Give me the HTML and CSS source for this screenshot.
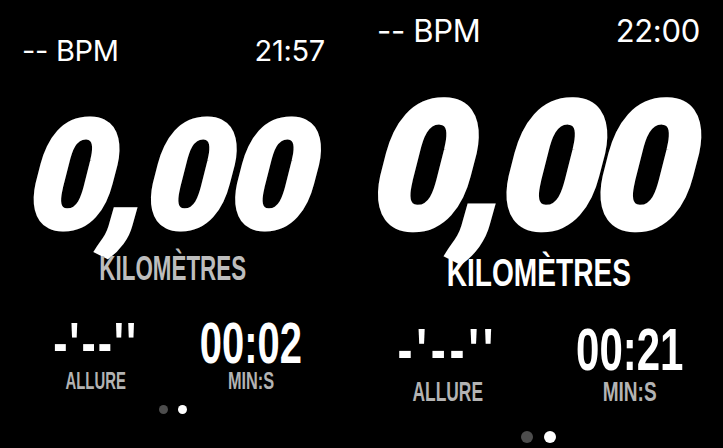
FILE: index.html
```html
<!DOCTYPE html>
<html lang="fr">
<head>
<meta charset="utf-8">
<title>Course</title>
<link rel="stylesheet" href="styles.css">
</head>
<body>
<main class="screen">
  <section class="panel p1">
    <div class="top"><span>-- BPM</span><span>21:57</span></div>
    <div class="dist">0<span class="comma">,</span>00</div>
    <div class="unit"><span>KILOMÈTRES</span></div>
    <div class="stats">
      <div class="stat">
        <div class="val pace"><span>-'--''</span></div>
        <div class="lbl"><span class="la">ALLURE</span></div>
      </div>
      <div class="stat">
        <div class="val"><span>00:02</span></div>
        <div class="lbl"><span class="lm">MIN:S</span></div>
      </div>
    </div>
    <div class="dots"><i></i><i class="on"></i></div>
  </section>
  <section class="panel p2">
    <div class="top"><span>-- BPM</span><span>22:00</span></div>
    <div class="dist">0<span class="comma">,</span>00</div>
    <div class="unit"><span>KILOMÈTRES</span></div>
    <div class="stats">
      <div class="stat">
        <div class="val pace"><span>-'--''</span></div>
        <div class="lbl"><span class="la">ALLURE</span></div>
      </div>
      <div class="stat">
        <div class="val"><span>00:21</span></div>
        <div class="lbl"><span class="lm">MIN:S</span></div>
      </div>
    </div>
    <div class="dots"><i></i><i class="on"></i></div>
  </section>
</main>
</body>
</html>
```
FILE: styles.css
```css
html, body {
  margin: 0;
  padding: 0;
  background: #000;
}
.screen {
  width: 723px;
  height: 448px;
  overflow: hidden;
  display: flex;
  background: #000;
  color: #fff;
}
.panel {
  display: flex;
  flex-direction: column;
  flex: none;
}
.p1 { width: 346px; padding-right: 15px; }
.p2 { width: 355px; padding-right: 7px; }

.top {
  display: flex;
  justify-content: space-between;
  font-family: Inter, "Liberation Sans", sans-serif;
  font-weight: 400;
  white-space: pre;
  letter-spacing: -0.3px;
}
.p1 .top { font-size: 29px; line-height: 30px; padding: 36px 21px 0 22px; }
.p2 .top { font-size: 31px; line-height: 32px; padding: 15px 16px 0 16px; }

.dist {
  font-family: Roboto, "Liberation Sans", sans-serif;
  font-weight: 900;
  font-style: italic;
  text-align: center;
  white-space: nowrap;
  color: #fff;
  -webkit-text-stroke: 4px #fff;
  transform: skewX(-6deg);
}
.p1 .dist { font-size: 152px; line-height: 120px; margin-top: 50px; letter-spacing: -1px; padding-left: 4px; }
.p1 .dist .comma { margin: 0 -2px 0 -4px; }
.p2 .dist { font-size: 178px; line-height: 140px; margin-top: 50px; letter-spacing: -6px; padding-right: 8px; -webkit-text-stroke: 5px #fff; }
.p2 .dist .comma { margin: 0 -2px 0 -4px; }

.unit, .val, .lbl {
  font-family: "Liberation Sans", Arial, sans-serif;
  font-weight: 700;
  text-align: center;
  white-space: nowrap;
}
.unit span, .val span, .lbl span {
  display: inline-block;
  transform-origin: 50% 50%;
}
.p1 .unit { font-size: 35px; line-height: 35px; margin-top: 14px; color: #bdbdbd; }
.p1 .unit span { transform: scaleX(0.64); }
.p2 .unit { font-size: 39px; line-height: 39px; margin-top: 16px; color: #fff; }
.p2 .unit span { transform: scaleX(0.72); }

.stats {
  display: grid;
  grid-template-columns: 1fr 1fr;
}
.p1 .stats { margin: 32px 18px 0 18px; }
.p2 .stats { margin: 30px -4.5px 0 -4.5px; }

.val { color: #fff; }
.val span { transform: scaleX(0.7); }
.val.pace span { transform: scaleX(0.75); }
.p1 .val { font-size: 57px; line-height: 52px; }
.p1 .val.pace span { letter-spacing: 2.6px; }
.p2 .val { font-size: 60px; line-height: 56px; }
.p2 .val.pace span { letter-spacing: 5px; }

.lbl { color: #b3b3b3; }
.lbl .la { transform: scaleX(0.62); }
.lbl .lm { transform: scaleX(0.68); }
.p1 .lbl { font-size: 24px; line-height: 22px; margin-top: 1px; }
.p2 .lbl { font-size: 28px; line-height: 26px; margin-top: 1px; }

.dots {
  display: flex;
  justify-content: center;
}
.dots i {
  display: block;
  border-radius: 50%;
  background: #4d4d4d;
}
.dots i.on { background: #fff; }
.p1 .dots { margin-top: 13px; gap: 10px; }
.p1 .dots i { width: 9px; height: 9px; }
.p2 .dots { margin-top: 25.5px; gap: 11px; }
.p2 .dots i { width: 12px; height: 12px; }
```
